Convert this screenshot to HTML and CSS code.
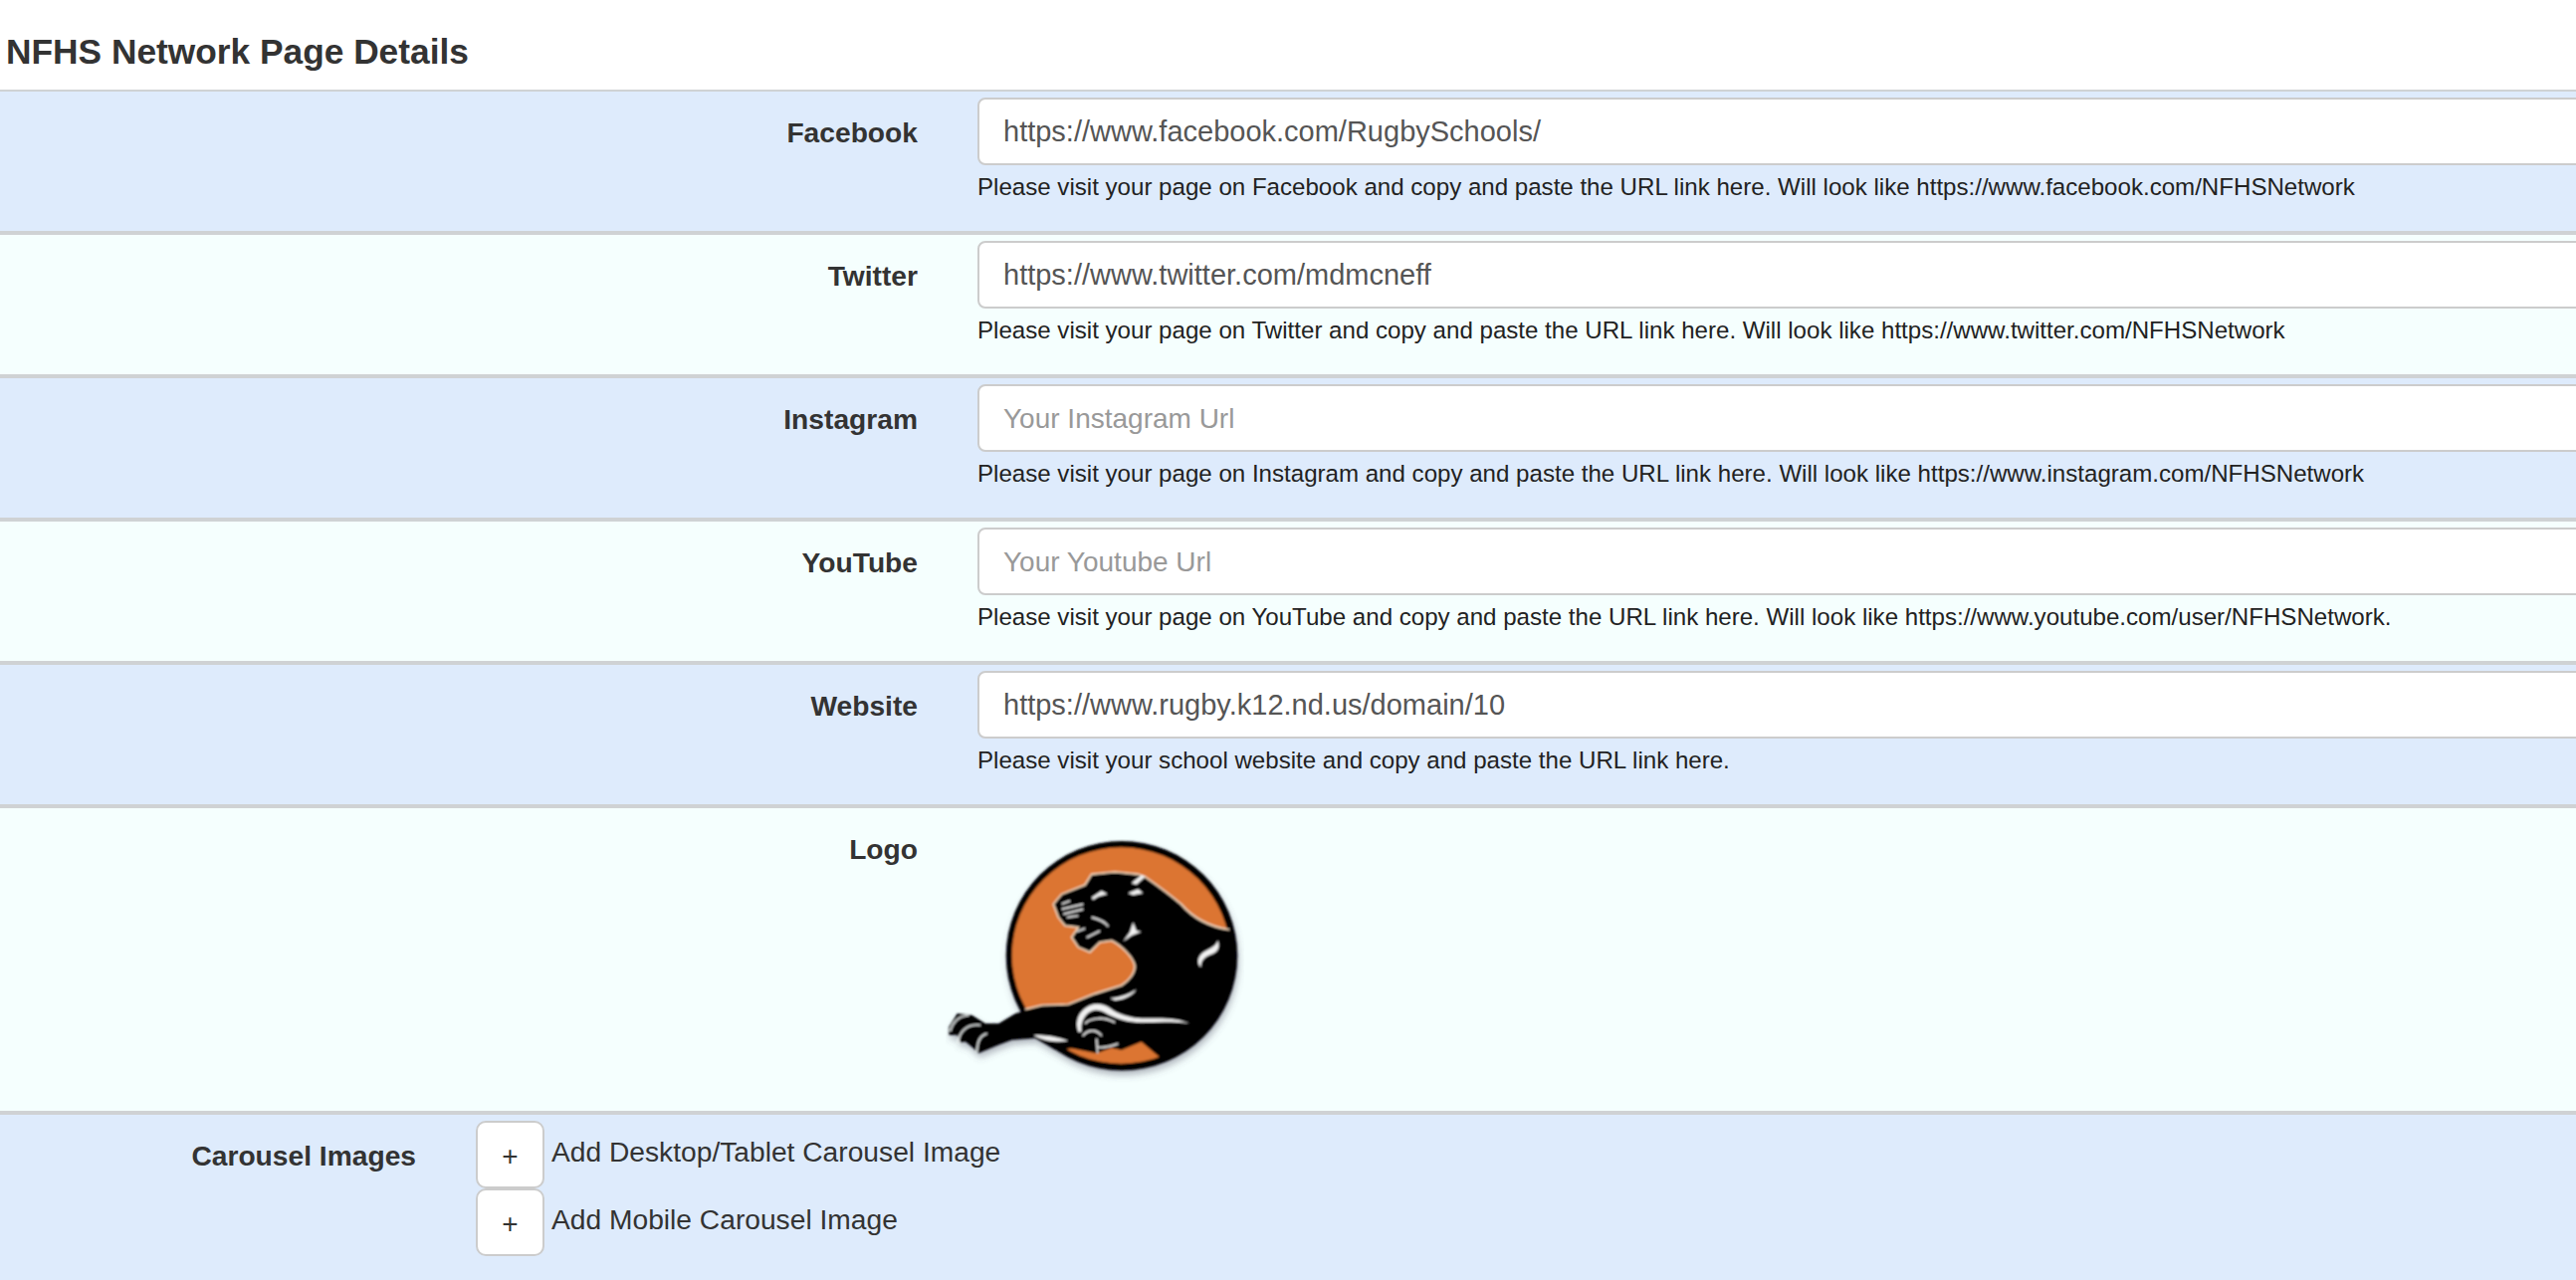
FILE: index.html
```html
<!DOCTYPE html>
<html>
<head>
    <meta charset="utf-8">
    <title>NFHS Network Page Details</title>
    <link rel="stylesheet" href="styles.css">
</head>
<body>
    <h3 class="page-title">NFHS Network Page Details</h3>
    <form class="details" autocomplete="off" onsubmit="event.preventDefault();">
        <div class="row odd">
            <label class="row-label">Facebook</label>
            <div class="row-field">
                <input type="text" placeholder="Your Facebook Url" value="https://www.facebook.com/RugbySchools/">
                <p class="help">Please visit your page on Facebook and copy and paste the URL link here. Will look like https://www.facebook.com/NFHSNetwork</p>
            </div>
        </div>
        <div class="row even">
            <label class="row-label">Twitter</label>
            <div class="row-field">
                <input type="text" placeholder="Your Twitter Url" value="https://www.twitter.com/mdmcneff">
                <p class="help">Please visit your page on Twitter and copy and paste the URL link here. Will look like https://www.twitter.com/NFHSNetwork</p>
            </div>
        </div>
        <div class="row odd">
            <label class="row-label">Instagram</label>
            <div class="row-field">
                <input type="text" placeholder="Your Instagram Url">
                <p class="help">Please visit your page on Instagram and copy and paste the URL link here. Will look like https://www.instagram.com/NFHSNetwork</p>
            </div>
        </div>
        <div class="row even">
            <label class="row-label">YouTube</label>
            <div class="row-field">
                <input type="text" placeholder="Your Youtube Url">
                <p class="help">Please visit your page on YouTube and copy and paste the URL link here. Will look like https://www.youtube.com/user/NFHSNetwork.</p>
            </div>
        </div>
        <div class="row odd">
            <label class="row-label">Website</label>
            <div class="row-field">
                <input type="text" placeholder="Your Website Url" value="https://www.rugby.k12.nd.us/domain/10">
                <p class="help">Please visit your school website and copy and paste the URL link here.</p>
            </div>
        </div>
        <div class="row even logo-row">
            <label class="row-label">Logo</label>
            <div class="row-field">
                <svg class="logo" viewBox="90 30 900 810" width="300" height="270" role="img" aria-label="Panther logo">
                    <defs>
                        <filter id="soft" x="-5%" y="-5%" width="110%" height="110%">
                            <feGaussianBlur stdDeviation="2.5"/>
                        </filter>
                        <filter id="shade" x="-5%" y="-5%" width="115%" height="115%">
                            <feDropShadow dx="4" dy="14" stdDeviation="10" flood-color="#556" flood-opacity="0.4"/>
                        </filter>
                    </defs>
                    <g filter="url(#shade)">
                        <g filter="url(#soft)">
                            <ellipse cx="621" cy="451" rx="349" ry="346" fill="#000"/>
                            <ellipse cx="619" cy="450" rx="329" ry="326" fill="#dc7532"/>
                            <path class="cat" d="M415 295 L440 265 L510 237 L530 205 L600 198 L670 205 L690 212 C730 240 770 270 800 295 C830 330 880 362 945 372 L962 392 A349 346 0 0 1 760 768 L745 765 L680 710 L620 735 L590 728 L545 745 L470 730 L420 735 L360 700 L290 705 L250 720 L190 745 L180 735 L150 710 L135 712 L125 690 L100 690 L100 665 L125 625 L170 630 L210 655 L250 655 L300 625 L380 600 L460 597 L540 565 L620 540 C645 525 662 500 660 480 C655 455 620 420 590 405 L555 410 L525 440 L490 425 L470 395 L490 365 L450 360 L430 335 Z"/>
                            <path class="rim" d="M945 372 C880 362 830 330 800 295 C770 270 730 240 690 212 L670 205 L600 198 L530 205 L510 237 L440 265 L415 295 L430 335 L450 360 L490 365 L470 395 L490 425 L525 440 L555 410 L590 405 C620 420 655 455 660 480 C662 500 645 525 620 540 L540 565 L460 597 L380 600 L330 612"/>
                            <path class="mark" d="M530 275 L560 255 L578 265 L550 272 L535 282 Z M640 262 L670 250 L685 262 L655 268 Z M650 232 L680 208 L692 212 L665 236 Z M655 350 L665 375 L680 378 L650 390 L625 408 L645 380 Z M910 405 C905 425 880 430 865 442 C848 455 848 478 860 485 C858 465 872 452 895 445 C912 438 918 420 910 405 Z M585 578 C615 578 645 565 665 552 C650 575 620 585 600 585 Z M355 690 C390 690 430 695 460 708 C420 712 385 708 355 690 Z"/>
                            <path class="line" d="M440 295 L465 285 M440 310 L505 295 M445 325 L505 310 M455 335 L490 330 M530 335 C550 340 570 348 580 362 M485 378 L510 368 M515 396 L555 376"/>
                            <path class="mark" d="M490 680 C480 650 490 625 510 610 C525 595 555 590 580 605 C600 620 625 635 680 640 C730 640 780 635 825 655 C780 648 730 650 680 652 C640 652 600 640 570 622 C550 610 530 612 515 628 C500 645 498 660 500 680 Z"/>
                            <path class="line" d="M510 655 C530 635 570 635 600 652 M503 692 C520 672 545 672 560 692 M545 700 L548 745 M548 725 C565 732 590 722 610 716"/>
                            <path class="paw" d="M130 712 C128 680 155 655 195 660 M185 740 C185 708 195 690 215 685 M104 678 C112 650 130 632 160 630"/>
                        </g>
                    </g>
                </svg>
            </div>
        </div>
        <div class="row odd carousel-row">
            <label class="row-label">Carousel Images</label>
            <div class="row-field">
                <div class="add-line">
                    <button type="button" class="add-btn">+</button>
                    <span class="add-text">Add Desktop/Tablet Carousel Image</span>
                </div>
                <div class="add-line">
                    <button type="button" class="add-btn">+</button>
                    <span class="add-text">Add Mobile Carousel Image</span>
                </div>
            </div>
        </div>
    </form>
</body>
</html>
```
FILE: styles.css
```css
* {
    box-sizing: border-box;
}

html, body {
    margin: 0;
    padding: 0;
    overflow: hidden;
}

body {
    font-family: "Liberation Sans", Arial, sans-serif;
    color: #333;
    background: #fff;
    height: 1286px;
}

.page-title {
    height: 92px;
    margin: 0;
    padding: 28px 0 0 6px;
    font-size: 35.3px;
    line-height: 48px;
    font-weight: bold;
    border-bottom: 2px solid #cfd2d4;
}

.row {
    display: flex;
    height: 144px;
    border-bottom: 4px solid #cfd2d4;
}

.odd {
    background: #deebfc;
}

.even {
    background: #f5fffe;
}

.row-label {
    width: 922px;
    flex: none;
    padding-top: 23px;
    text-align: right;
    font-size: 28.2px;
    line-height: 36px;
    font-weight: bold;
}

.row-field {
    margin-left: 60px;
    flex: 1;
    min-width: 0;
    padding-top: 6px;
}

.row-field input {
    display: block;
    width: 1700px;
    height: 68px;
    padding: 0 24px;
    font-family: inherit;
    font-size: 29px;
    color: #555;
    background: #fff;
    border: 2px solid #ccc;
    border-radius: 8px;
}

.row-field input::placeholder {
    font-size: 28px;
    color: #999;
}

.help {
    margin: 4px 0 0;
    font-size: 24.1px;
    line-height: 36px;
    color: #222;
}

.logo-row {
    height: 308px;
}

.logo {
    display: block;
    margin: 2px 0 0 -32px;
}

.cat {
    fill: #000;
}

.rim {
    fill: none;
    stroke: #f4d9bd;
    stroke-width: 5;
}

.mark {
    fill: #f2f2f2;
}

.line {
    fill: none;
    stroke: #e8e8e8;
    stroke-width: 5;
}

.paw {
    fill: none;
    stroke: #e4e8e8;
    stroke-width: 5;
}

.carousel-row {
    height: 166px;
    border-bottom: 0;
}

.carousel-row .row-label {
    width: 418px;
    padding-top: 23px;
}

.carousel-row .row-field {
    margin-left: 60px;
}

.add-line {
    display: flex;
    height: 68px;
}

.add-btn {
    width: 69px;
    height: 68px;
    flex: none;
    padding: 4px 0 0;
    font-family: inherit;
    font-size: 28px;
    color: #333;
    background: #fff;
    border: 2px solid #ccc;
    border-radius: 10px;
}

.add-text {
    margin-left: 7px;
    font-size: 28.2px;
    line-height: 62px;
}
```
